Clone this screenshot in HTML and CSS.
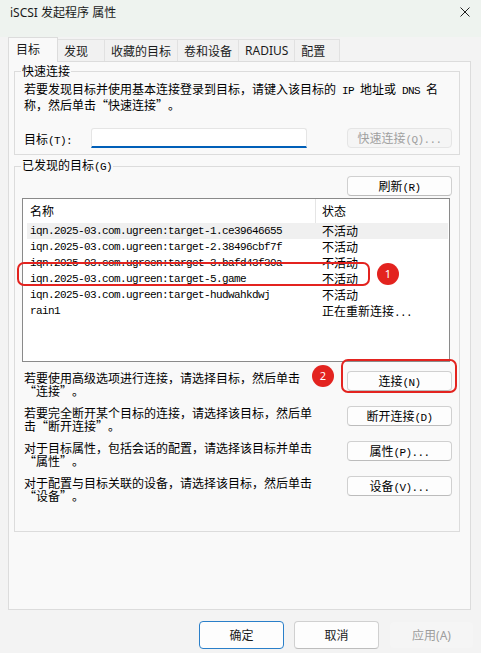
FILE: index.html
```html
<!DOCTYPE html>
<html lang="zh-CN">
<head>
    <meta charset="UTF-8">
    <title>iSCSI 发起程序 属性</title>
    <link rel="stylesheet" href="styles.css">
</head>
<body>
<div class="window">
    <div class="titlebar">
        <span class="title">iSCSI 发起程序 属性</span>
        <svg class="close" width="10" height="10" viewBox="0 0 10 10">
            <path d="M0.5 0.5L9.5 9.5M9.5 0.5L0.5 9.5" stroke="#1f1f1f" stroke-width="1" fill="none"/>
        </svg>
    </div>

    <div class="tabs">
        <div class="tab active">目标</div>
        <div class="tab">发现</div>
        <div class="tab">收藏的目标</div>
        <div class="tab">卷和设备</div>
        <div class="tab latin">RADIUS</div>
        <div class="tab last">配置</div>
    </div>

    <div class="panel">
        <fieldset class="group quick">
            <legend>快速连接</legend>
            <div class="group-body">
                <p class="note">若要发现目标并使用基本连接登录到目标，请键入该目标的<span class="en"> IP </span>地址或<span class="en"> DNS </span>名<br>称，然后单击<span class="ql">“</span>快速连接<span class="qr">”</span>。</p>
                <div class="target-row">
                    <label for="target" class="target-label">目标<span class="en">(T):</span></label>
                    <input type="text" id="target" class="target-input">
                    <button class="btn" disabled>快速连接<span class="en">(Q)...</span></button>
                </div>
            </div>
        </fieldset>

        <fieldset class="group found">
            <legend>已发现的目标<span class="en">(G)</span></legend>
            <div class="group-body">
                <div class="refresh-row">
                    <button class="btn">刷新<span class="en">(R)</span></button>
                </div>

                <div class="list">
                    <div class="list-head">
                        <div class="col-name">名称</div>
                        <div class="col-state">状态</div>
                    </div>
                    <div class="row hover">
                        <div class="col-name mono">iqn.2025-03.com.ugreen:target-1.ce39646655</div>
                        <div class="col-state">不活动</div>
                    </div>
                    <div class="row">
                        <div class="col-name mono">iqn.2025-03.com.ugreen:target-2.38496cbf7f</div>
                        <div class="col-state">不活动</div>
                    </div>
                    <div class="row">
                        <div class="col-name mono">iqn.2025-03.com.ugreen:target-3.bafd43f30a</div>
                        <div class="col-state">不活动</div>
                    </div>
                    <div class="row">
                        <div class="col-name mono">iqn.2025-03.com.ugreen:target-5.game</div>
                        <div class="col-state">不活动</div>
                    </div>
                    <div class="row">
                        <div class="col-name mono">iqn.2025-03.com.ugreen:target-hudwahkdwj</div>
                        <div class="col-state">不活动</div>
                    </div>
                    <div class="row">
                        <div class="col-name mono">rain1</div>
                        <div class="col-state">正在重新连接<span class="en">...</span></div>
                    </div>
                </div>

                <div class="action first">
                    <p class="note">若要使用高级选项进行连接，请选择目标，然后单击<br><span class="ql">“</span>连接<span class="qr">”</span>。</p>
                    <button class="btn">连接<span class="en">(N)</span></button>
                </div>
                <div class="action">
                    <p class="note">若要完全断开某个目标的连接，请选择该目标，然后单<br>击<span class="ql">“</span>断开连接<span class="qr">”</span>。</p>
                    <button class="btn">断开连接<span class="en">(D)</span></button>
                </div>
                <div class="action">
                    <p class="note">对于目标属性，包括会话的配置，请选择该目标并单击<br><span class="ql">“</span>属性<span class="qr">”</span>。</p>
                    <button class="btn">属性<span class="en">(P)...</span></button>
                </div>
                <div class="action">
                    <p class="note">对于配置与目标关联的设备，请选择该目标，然后单击<br><span class="ql">“</span>设备<span class="qr">”</span>。</p>
                    <button class="btn">设备<span class="en">(V)...</span></button>
                </div>
            </div>
        </fieldset>
    </div>

    <div class="footer">
        <button class="dlg-btn primary">确定</button>
        <button class="dlg-btn">取消</button>
        <button class="dlg-btn" disabled>应用(A)</button>
    </div>

    <!-- annotations drawn over the dialog -->
    <div class="mark mark-row"></div>
    <div class="badge badge-1">1</div>
    <div class="mark mark-btn"></div>
    <div class="badge badge-2">2</div>
</div>
</body>
</html>
```

FILE: styles.css
```css
* {
    box-sizing: border-box;
}
body {
    margin: 0;
    background: #f3f3f3;
    font-family: "Noto Sans CJK SC", sans-serif;
    font-size: 12px;
    color: #000;
}
.window {
    position: relative;
    width: 481px;
    height: 653px;
    overflow: hidden;
}
.en, .mono {
    font-family: "Liberation Mono", "Noto Sans CJK SC", monospace;
    font-size: 11px;
    letter-spacing: -0.6px;
}
/* full-width quote marks */
.ql, .qr {
    display: inline-block;
    width: 12px;
}
.ql {
    text-align: right;
}
.qr {
    text-align: left;
}

/* title bar */
.titlebar {
    height: 37px;
    padding: 5px 0 0 10px;
    background: #eef3ef;
    display: flex;
    justify-content: space-between;
    align-items: flex-start;
}
.title {
    font-family: "Noto Sans", "Noto Sans CJK SC", sans-serif;
    line-height: 16px;
    color: #1a1a1a;
}
.close {
    margin: 2px 11px 0 0;
}

/* tabs */
.tabs {
    display: flex;
    align-items: flex-end;
    height: 24px;
    padding-left: 8px;
}
.tab {
    height: 22px;
    min-width: 46px;
    padding: 0 6px;
    line-height: 21px;
    border: 1px solid #e1e1e1;
    border-right: none;
    border-bottom: none;
    background: #f1f1f1;
    color: #1a1a1a;
}
.tab.latin {
    font-family: "Noto Sans", sans-serif;
}
.tab.last {
    border-right: 1px solid #e1e1e1;
}
.tab.active {
    position: relative;
    z-index: 1;
    width: 50px;
    height: 25px;
    margin-bottom: -1px;
    padding-left: 7px;
    line-height: 22px;
    border-color: #dcdcdc;
    border-right: 1px solid #dcdcdc;
    background: #f9f9f9;
}
.tab.active + .tab {
    border-left: none;
}

/* panel */
.panel {
    margin-left: 8px;
    width: 463px;
    height: 549px;
    border: 1px solid #dcdcdc;
    background: #f9f9f9;
}
.group {
    width: 446px;
    margin: 0 0 0 5px;
    padding: 0;
    min-width: 0;
    border: 1px solid #dcdcdc;
}
.group legend {
    margin-left: 6px;
    padding: 0 1px;
    line-height: 14px;
}
.quick {
    margin-top: 2px;
}
.found {
    margin-top: 3px;
}
.note {
    margin: 0;
    line-height: 13px;
}
.quick .group-body {
    padding: 4px 7px 6px 9px;
}
.target-row {
    display: flex;
    align-items: center;
    margin-top: 17px;
    height: 20px;
}
.target-label {
    width: 67px;
}
.target-input {
    width: 216px;
    height: 20px;
    border: 1px solid #e5e5e5;
    border-bottom: 2px solid #005fb8;
    border-radius: 3px 3px 0 0;
    background: #fff;
    outline: none;
}
.target-row .btn {
    margin-left: auto;
}

.btn {
    width: 105px;
    height: 20px;
    padding: 0;
    border: 1px solid #d0d0d0;
    border-bottom-color: #bcbcbc;
    border-radius: 4px;
    background: #fdfdfd;
    font-family: "Noto Sans CJK SC", sans-serif;
    font-size: 12px;
    line-height: 18px;
    color: #000;
}
.btn:disabled {
    background: #f5f5f5;
    border-color: #e5e5e5;
    color: #a0a0a0;
}

.found .group-body {
    padding: 2px 7px 20px 7px;
}
.refresh-row {
    display: flex;
    justify-content: flex-end;
}

/* target list */
.list {
    margin-top: 2px;
    width: 428px;
    height: 164px;
    border: 1px solid #8a8a8a;
    background: #fff;
}
.list-head, .row {
    display: flex;
}
.list-head {
    height: 24px;
    line-height: 24px;
    padding-left: 4px;
}
.list-head .col-name {
    width: 289px;
    padding-left: 3px;
    border-right: 1px solid #e5e5e5;
}
.list-head .col-state {
    padding-left: 6px;
}
.row {
    height: 16px;
    line-height: 16px;
    margin: 0 1px 0 4px;
}
.row.hover {
    background: #f0f0f0;
}
.row .col-name {
    width: 295px;
    padding-left: 3px;
    white-space: nowrap;
}

/* actions */
.action {
    display: flex;
    align-items: flex-start;
    height: 35px;
}
.action.first {
    margin-top: 9px;
}
.action .note {
    padding-left: 2px;
}
.action .btn {
    margin-left: auto;
}

/* footer */
.footer {
    display: flex;
    justify-content: flex-end;
    gap: 10px;
    margin-top: 11px;
    padding-right: 7px;
}
.dlg-btn {
    width: 85px;
    height: 28px;
    padding: 0;
    border: 1px solid #d0d0d0;
    border-bottom-color: #bdbdbd;
    border-radius: 4px;
    background: #fdfdfd;
    font-family: "Noto Sans", "Noto Sans CJK SC", sans-serif;
    font-size: 12px;
    color: #1a1a1a;
}
.dlg-btn.primary {
    border-color: #2a7fc9;
}
.dlg-btn:disabled {
    background: #f5f5f5;
    border-color: #f3f3f3;
    color: #9d9d9d;
}

/* red annotations */
.mark {
    position: absolute;
    border: 2px solid #e3231f;
    border-radius: 7px;
}
.mark-row {
    left: 17px;
    top: 262px;
    width: 353px;
    height: 24px;
}
.mark-btn {
    left: 341px;
    top: 359px;
    width: 116px;
    height: 34px;
}
.badge {
    position: absolute;
    width: 22px;
    height: 22px;
    border-radius: 50%;
    background: #e3231f;
    color: #fff;
    font-family: "Noto Sans", sans-serif;
    font-size: 11px;
    line-height: 22px;
    text-align: center;
}
.badge-1 {
    left: 377px;
    top: 263px;
}
.badge-2 {
    left: 312px;
    top: 365px;
}
```
